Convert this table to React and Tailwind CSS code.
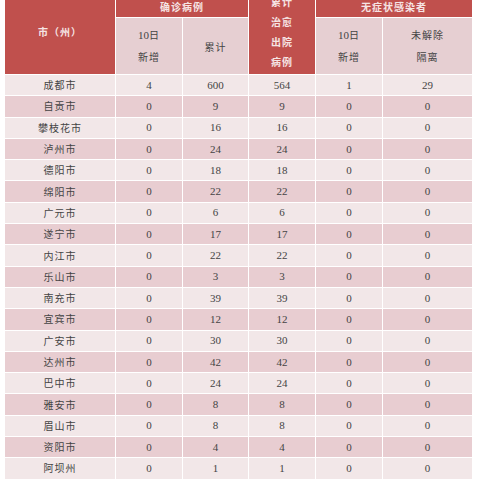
import React from "react";

const rows = [
    ["成都市", 4, 600, 564, 1, 29],
    ["自贡市", 0, 9, 9, 0, 0],
    ["攀枝花市", 0, 16, 16, 0, 0],
    ["泸州市", 0, 24, 24, 0, 0],
    ["德阳市", 0, 18, 18, 0, 0],
    ["绵阳市", 0, 22, 22, 0, 0],
    ["广元市", 0, 6, 6, 0, 0],
    ["遂宁市", 0, 17, 17, 0, 0],
    ["内江市", 0, 22, 22, 0, 0],
    ["乐山市", 0, 3, 3, 0, 0],
    ["南充市", 0, 39, 39, 0, 0],
    ["宜宾市", 0, 12, 12, 0, 0],
    ["广安市", 0, 30, 30, 0, 0],
    ["达州市", 0, 42, 42, 0, 0],
    ["巴中市", 0, 24, 24, 0, 0],
    ["雅安市", 0, 8, 8, 0, 0],
    ["眉山市", 0, 8, 8, 0, 0],
    ["资阳市", 0, 4, 4, 0, 0],
    ["阿坝州", 0, 1, 1, 0, 0],
    ["甘孜州", 0, 78, 78, 0, 0],
];

const cjk = { fontFamily: '"Noto Sans CJK SC", sans-serif' };
const num = { fontFamily: '"Liberation Serif", serif' };

export default function App() {
    return (
        <div className="h-[480px] w-[480px] overflow-hidden bg-white">
            <table
                className="ml-[4px] mt-[-9px] table-fixed border-separate border-spacing-[1px] text-center text-[#444]"
                style={cjk}
            >
                <colgroup>
                    <col className="w-[110px]" />
                    <col className="w-[66px]" />
                    <col className="w-[65px]" />
                    <col className="w-[66px]" />
                    <col className="w-[66px]" />
                    <col className="w-[89px]" />
                </colgroup>
                <thead>
                    <tr className="h-[25px]">
                        <th rowSpan={2} className="bg-[#c0504d] pb-[4px] text-[10px] font-bold tracking-[1px] text-[#f6e4e4]">
                            市（州）
                        </th>
                        <th colSpan={2} className="bg-[#c0504d] pt-[3px] text-[10px] font-bold tracking-[1px] text-[#f6e4e4]">
                            确诊病例
                        </th>
                        <th rowSpan={2} className="bg-[#c0504d] p-0 pb-[2px] text-[10px] font-bold leading-[20px] tracking-[1px] text-[#f6e4e4]">
                            累计<br />治愈<br />出院<br />病例
                        </th>
                        <th colSpan={2} className="bg-[#c0504d] pt-[3px] text-[10px] font-bold tracking-[1px] text-[#f6e4e4]">
                            无症状感染者
                        </th>
                    </tr>
                    <tr className="h-[56px]">
                        <th className="bg-[#e6cfd2] text-[10px] font-normal leading-[22px] tracking-[1px]">
                            <span style={num} className="text-[11px] tracking-normal">10</span>日<br />新增
                        </th>
                        <th className="bg-[#e6cfd2] text-[10px] font-normal tracking-[1px]">累计</th>
                        <th className="bg-[#e6cfd2] text-[10px] font-normal leading-[22px] tracking-[1px]">
                            <span style={num} className="text-[11px] tracking-normal">10</span>日<br />新增
                        </th>
                        <th className="bg-[#e6cfd2] text-[10px] font-normal leading-[22px] tracking-[1px]">
                            未解除<br />隔离
                        </th>
                    </tr>
                </thead>
                <tbody>
                    {rows.map((r, i) => (
                        <tr key={r[0]} className={`h-[20.3px] ${i % 2 === 0 ? "bg-[#f2e7e8]" : "bg-[#e8cdd1]"}`}>
                            <td className="p-0 text-[10px] leading-none tracking-[1px]">{r[0]}</td>
                            {r.slice(1).map((v, j) => (
                                <td key={j} style={num} className="p-0 text-[11px] leading-none">
                                    {v}
                                </td>
                            ))}
                        </tr>
                    ))}
                </tbody>
            </table>
        </div>
    );
}
